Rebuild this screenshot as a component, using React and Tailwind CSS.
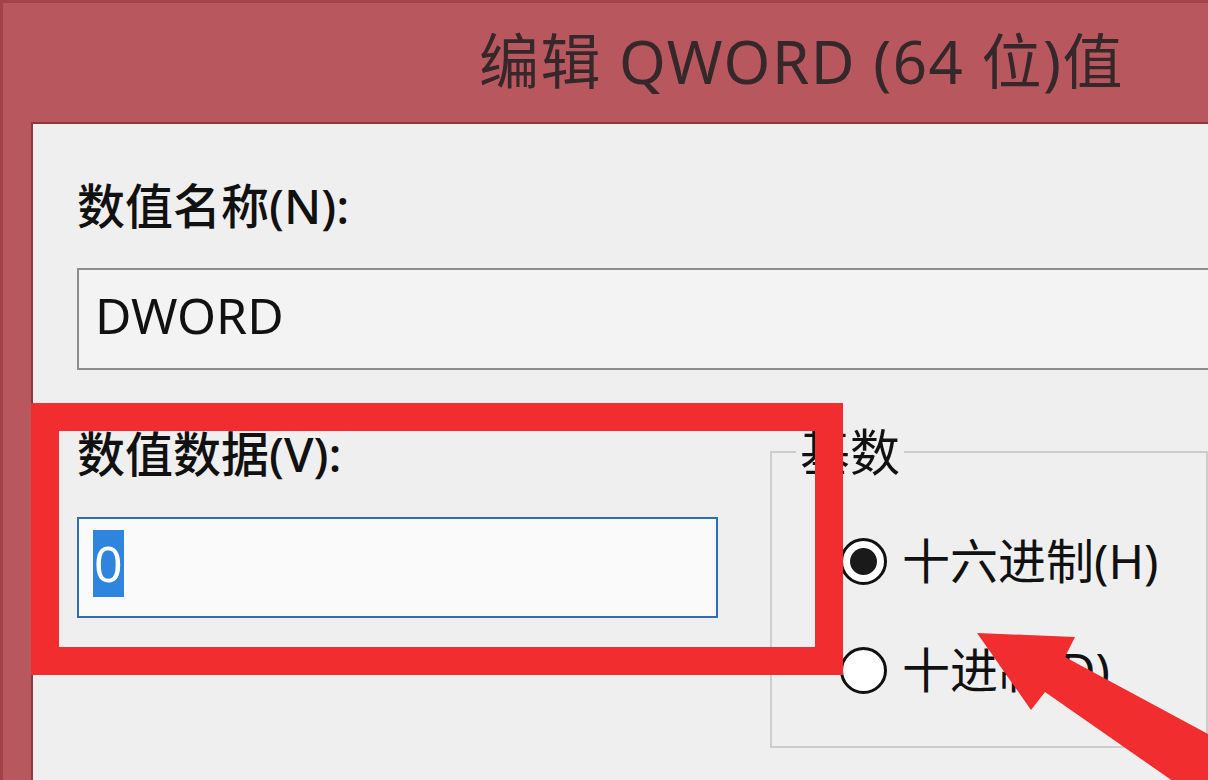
import React from "react";

const font = { fontFamily: '"Noto Sans", "Noto Sans CJK SC", sans-serif' };

function Radio({ checked }) {
  return (
    <div className="w-[47px] h-[47px] rounded-full border-[3px] border-[#111] bg-white flex items-center justify-center shrink-0">
      {checked && <div className="w-[27px] h-[27px] rounded-full bg-[#1a1a1a]" />}
    </div>
  );
}

export default function App() {
  return (
    <div
      className="relative w-[1208px] h-[780px] overflow-hidden bg-[#b9575f] border-t-[3px] border-l-[3px] border-[#a2434c] flex flex-col"
      style={font}
    >
      <div className="h-[119px] shrink-0 flex items-center pl-[476px]">
        <span className="text-[60px] leading-none text-[#35282b] font-normal tracking-[1.5px] pb-[4px]">
          编辑 QWORD (64 位)值
        </span>
      </div>
      <div className="ml-[28px] flex-1 bg-[#efefef] border-t-2 border-l-2 border-[#8c3840] pl-[44px] pt-[54px] text-[#111]">
        <div className="text-[48px] leading-[56px] font-medium">数值名称(N):</div>
        <div className="mt-[34px] w-[1200px] h-[102px] border-2 border-[#8d8d8d] bg-[#f3f3f3] flex items-center pl-[16px] pb-[8px]">
          <span className="text-[50px] leading-none">DWORD</span>
        </div>
        <div className="flex mt-[56px]">
          <div className="w-[641px] shrink-0">
            <div className="text-[48px] leading-[56px] font-medium">数值数据(V):</div>
            <div className="mt-[35px] h-[101px] border-2 border-[#2f6db3] bg-[#fafafa] flex items-center pl-[14px] pb-[8px]">
              <span className="bg-[#2f84dd] text-white text-[50px] leading-[67px] px-[1px]">0</span>
            </div>
          </div>
          <fieldset className="ml-[52px] mt-[6px] w-[600px] h-[316px] border-2 border-[#cdcdcd] pl-[24px] pt-[59px]">
            <legend className="px-[4px] text-[50px] leading-[40px]">基数</legend>
            <div className="flex flex-col gap-[49px] pl-[44px]">
              <div className="h-[60px] flex items-center gap-[15px]">
                <Radio checked />
                <span className="text-[48px] leading-none">十六进制(H)</span>
              </div>
              <div className="h-[60px] flex items-center gap-[15px]">
                <Radio />
                <span className="text-[48px] leading-none">十进制(D)</span>
              </div>
            </div>
          </fieldset>
        </div>
      </div>

      <div className="absolute left-[28px] top-[400px] w-[812px] h-[272px] border-[28px] border-[#f22d2f]" />

      <svg className="absolute left-[-3px] top-[-3px]" width="1208" height="780" viewBox="0 0 1208 780">
        <polygon
          points="977,633 1075,637 1065,657 1210,735 1210,800 1200,800 1045,692 1031,710"
          fill="#f22d2f"
        />
      </svg>
    </div>
  );
}
